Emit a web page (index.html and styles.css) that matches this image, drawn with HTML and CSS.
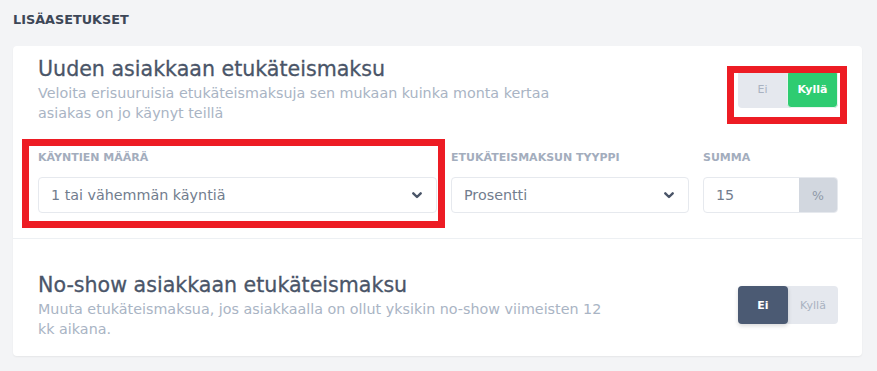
FILE: index.html
```html
<!DOCTYPE html>
<html lang="fi">
<head>
<meta charset="utf-8">
<title>Lisäasetukset</title>
<link rel="stylesheet" href="styles.css">
</head>
<body>
<div class="page">
  <h2 class="section-heading">LISÄASETUKSET</h2>
  <div class="card">
    <div class="setting">
      <div class="setting-top">
        <div class="setting-text">
          <h3 class="setting-title">Uuden asiakkaan etukäteismaksu</h3>
          <p class="setting-desc">Veloita erisuuruisia etukäteismaksuja sen mukaan kuinka monta kertaa asiakas on jo käynyt teillä</p>
        </div>
        <div class="toggle">
          <span class="toggle-opt">Ei</span>
          <span class="toggle-opt active-yes">Kyllä</span>
        </div>
      </div>
      <div class="fields">
        <div class="field">
          <label class="field-label">KÄYNTIEN MÄÄRÄ</label>
          <div class="select">
            <span>1 tai vähemmän käyntiä</span>
            <svg class="chev" width="10" height="7" viewBox="0 0 10 7"><path d="M1.3 1.3 5 5 8.7 1.3" fill="none" stroke="#4a5568" stroke-width="2.4" stroke-linecap="round" stroke-linejoin="round"/></svg>
          </div>
        </div>
        <div class="field">
          <label class="field-label">ETUKÄTEISMAKSUN TYYPPI</label>
          <div class="select">
            <span>Prosentti</span>
            <svg class="chev" width="10" height="7" viewBox="0 0 10 7"><path d="M1.3 1.3 5 5 8.7 1.3" fill="none" stroke="#4a5568" stroke-width="2.4" stroke-linecap="round" stroke-linejoin="round"/></svg>
          </div>
        </div>
        <div class="field">
          <label class="field-label">SUMMA</label>
          <div class="input-group">
            <span class="input-value">15</span>
            <span class="addon">%</span>
          </div>
        </div>
      </div>
    </div>
    <div class="setting setting-second">
      <div class="setting-top">
        <div class="setting-text">
          <h3 class="setting-title">No-show asiakkaan etukäteismaksu</h3>
          <p class="setting-desc">Muuta etukäteismaksua, jos asiakkaalla on ollut yksikin no-show viimeisten 12 kk aikana.</p>
        </div>
        <div class="toggle">
          <span class="toggle-opt active-no">Ei</span>
          <span class="toggle-opt">Kyllä</span>
        </div>
      </div>
    </div>
  </div>
  <div class="annot annot-toggle"></div>
  <div class="annot annot-field"></div>
</div>
</body>
</html>
```
FILE: styles.css
```css
* { box-sizing: border-box; }
html, body { margin: 0; padding: 0; }
body {
  background: #f3f4f6;
  font-family: "DejaVu Sans", "Open Sans", sans-serif;
  width: 877px;
  height: 371px;
  overflow: hidden;
}
.page {
  position: relative;
  padding: 10px 15px 0 13px;
}
.section-heading {
  margin: 0;
  font-size: 12.8px;
  line-height: 20px;
  font-weight: 700;
  color: #3d4757;
}
.card {
  margin-top: 16px;
  background: #fff;
  border-radius: 4px;
  box-shadow: 0 1px 2px rgba(0,0,0,0.06);
}
.setting {
  padding: 9px 24px 25px 25px;
  border-bottom: 1px solid #edf0f3;
}
.setting-second {
  border-bottom: none;
  padding-top: 32px;
  padding-bottom: 17px;
}
.setting-top {
  display: flex;
  align-items: center;
  justify-content: space-between;
}
.setting-text { width: 566px; }
.setting-title {
  margin: 0;
  font-size: 20.6px;
  line-height: 28px;
  font-weight: 400;
  color: #4a5568;
  -webkit-text-stroke: 0.3px #4a5568;
}
.setting-desc {
  margin: 0;
  font-size: 14.3px;
  line-height: 20px;
  color: #a9b4c4;
}
.toggle {
  display: flex;
  width: 100px;
  height: 38px;
  background: #e5e8ee;
  border-radius: 4px;
}
.toggle-opt {
  flex: 1;
  display: flex;
  align-items: center;
  justify-content: center;
  font-size: 11px;
  color: #a9b2c1;
  border-radius: 4px;
}
.active-yes {
  background: #2ecc71;
  color: #fff;
  font-weight: 700;
  border: 1px solid #e8f5ee;
}
.active-no {
  background: #4b5a73;
  color: #fff;
  font-weight: 700;
  box-shadow: 0 2px 4px rgba(0,0,0,0.15);
}
.fields {
  display: grid;
  grid-template-columns: 399px 238px 1fr;
  column-gap: 14px;
  margin-top: 27px;
}
.field-label {
  display: block;
  font-size: 11px;
  line-height: 16px;
  font-weight: 700;
  color: #a3adbd;
  margin-bottom: 11px;
}
.select, .input-group {
  height: 36px;
  border: 1px solid #e6e9ee;
  border-radius: 4px;
  display: flex;
  align-items: center;
  font-size: 14.3px;
  color: #727d8e;
}
.select {
  justify-content: space-between;
  padding: 0 14px 0 12px;
}
.input-group { overflow: hidden; }
.input-value { flex: 1; padding-left: 12px; }
.addon {
  width: 38px;
  height: 100%;
  background: #d2d7df;
  display: flex;
  align-items: center;
  justify-content: center;
  color: #8f99a8;
  font-size: 12.5px;
}
.annot {
  position: absolute;
  border: 7px solid #ed1c24;
}
.annot-toggle { left: 727px; top: 66px; width: 120px; height: 58px; }
.annot-field { left: 22px; top: 139px; width: 423px; height: 89px; }
```
